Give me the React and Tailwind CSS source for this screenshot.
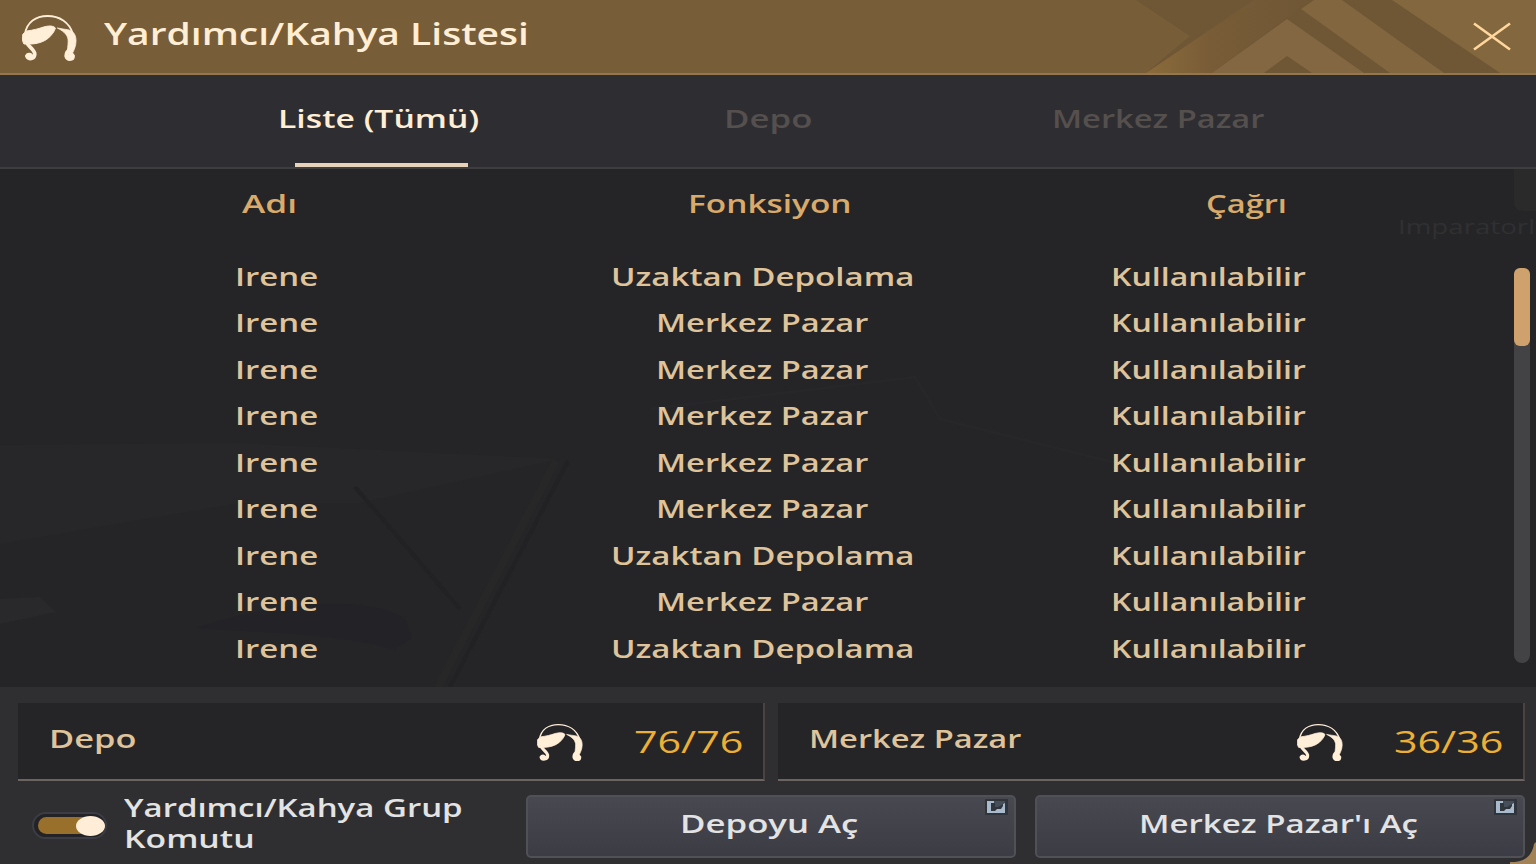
import React, { useLayoutEffect, useRef, useState } from 'react';

const rows = [
  'Uzaktan Depolama',
  'Merkez Pazar',
  'Merkez Pazar',
  'Merkez Pazar',
  'Merkez Pazar',
  'Merkez Pazar',
  'Uzaktan Depolama',
  'Merkez Pazar',
  'Uzaktan Depolama',
];

// Label stretched horizontally so that it fills the given width
function Wide({ width, className = '', children }) {
  const ref = useRef(null);
  const [scale, setScale] = useState(1);

  useLayoutEffect(() => {
    setScale(width / ref.current.offsetWidth);
  }, [width, children]);

  return (
    <span className={`block ${className}`} style={{ width }}>
      <span
        ref={ref}
        className="inline-block whitespace-nowrap origin-left"
        style={{ transform: `scaleX(${scale})` }}
      >
        {children}
      </span>
    </span>
  );
}

function HelperIcon({ className }) {
  return (
    <svg viewBox="0 0 56 48" preserveAspectRatio="none" className={className} fill="none" stroke="#ffeed8">
      <path d="M3 20C5 8 14 2 26 2C38 2 48 8 52 20" strokeWidth="1.8" />
      <path d="M1 20L5 17C12 16 16 15 22 13C26 12 31 11 34 14C33 18 30 21 27 24C22 28 15 30 8 30H2C0 27 0 23 1 20Z" fill="#ffeed8" strokeWidth="1" />
      <path d="M36 14L42 15L48 16C53 18 55 21 55 27C55 32 53 36 51 40L46 40C46 35 47 32 47 27C47 22 44 18 36 14Z" fill="#ffeed8" strokeWidth="0.8" />
      <path d="M5 29C7 33 13 36 13 40C13 45 6 46 5 42C6 40 9 40 10 43" strokeWidth="3.8" />
      <path d="M49 36C46 37 45 39 45 42C46 46 52 46 52 42C51 40 49 40 48 43" strokeWidth="3.8" />
    </svg>
  );
}

function Summary({ label, labelWidth, value }) {
  return (
    <div className="flex h-[78px] w-[747px] items-start border-r-2 border-b-2 border-r-[#4a4341] border-b-[#6b6462] bg-[#252527] pl-[31px]">
      <Wide width={labelWidth} className="mt-[17px] text-[25px] leading-9 font-semibold text-[#dfc39b]">{label}</Wide>
      <div className="mt-[20px] mr-[20px] ml-auto flex">
        <HelperIcon className="mr-[51px] h-[39px] w-[46px]" />
        <Wide width={109} className="text-[31px] leading-9 font-medium text-[#edb036]">{value}</Wide>
      </div>
    </div>
  );
}

function OpenButton({ label, labelWidth }) {
  return (
    <button className="relative flex h-[63px] w-[490px] justify-center rounded-[5px] border-2 border-[#505057] bg-linear-to-b from-[#484851] to-[#3c3c45] pt-[8px]">
      <Wide width={labelWidth} className="-ml-1 text-left text-[25px] leading-9 font-semibold text-[#e3e3e3]">{label}</Wide>
      <svg viewBox="0 0 23 16" className="absolute top-[2px] right-[6px] h-[16px] w-[23px]">
        <rect width="23" height="16" fill="#30353c" />
        <path d="M2 2H9V4H6V7H8V10H6V12H10L12 10H16L18 7V3H20V14H2Z" fill="#a9bacd" />
        <path d="M9 2H20V4L13 8H10V4H9Z" fill="#454f5a" />
        <path d="M6 7H9L11 9L9 11H6Z" fill="#30373f" />
      </svg>
    </button>
  );
}

export default function App() {
  return (
    <div className="relative flex h-[864px] w-[1536px] flex-col overflow-hidden bg-[#252527] font-['Open_Sans',sans-serif]">
      <header className="relative flex h-[75px] shrink-0 border-b-2 border-[#94764f] bg-[#775d38]">
        <svg viewBox="0 0 476 73" className="absolute top-0 right-0 h-[73px] w-[476px]">
          <defs>
            <linearGradient id="band" x1="0" x2="1">
              <stop offset="0" stopColor="#8b6b3b" />
              <stop offset="0.4" stopColor="#785c37" />
              <stop offset="1" stopColor="#6f5635" />
            </linearGradient>
          </defs>
          <path d="M76 0H476V73H86L130 36Z" fill="#6f5635" />
          <path d="M86 73L194 0H250L152 73Z" fill="url(#band)" />
          <path d="M152 73L227 19L304 73H252L227 56L204 73Z" fill="#836742" />
          <path d="M241 9L254 0H282L384 73H330Z" fill="#82663f" />
          <path d="M332 0H476V73H440Z" fill="#83673e" />
        </svg>
        <HelperIcon className="mt-[14px] ml-[22px] h-[48px] w-[55px]" />
        <Wide width={425} className="mt-[11px] ml-[27px] text-[31px] leading-[44px] font-semibold text-[#ffedd4]">Yardımcı/Kahya Listesi</Wide>
        <svg viewBox="0 0 40 30" className="relative mt-[22px] mr-[24px] ml-auto h-[30px] w-[40px]" stroke="#ffd69c" strokeWidth="2.6">
          <path d="M2 1.5L38 27.5M38 1.5L2 27.5" />
        </svg>
      </header>

      <nav className="grid h-[94px] shrink-0 grid-cols-[389px_388px_393px] border-b-2 border-[#3e3e41] bg-[#2e2e32] pl-[185px] text-[25px] leading-9 font-semibold">
        <div className="flex flex-col items-center text-[#ffedd4]">
          <Wide width={201} className="mt-[25px] -ml-0.5">Liste (Tümü)</Wide>
          <div className="mt-auto ml-1 h-1 w-[173px] bg-[#e7d3ba]" />
        </div>
        <Wide width={89} className="mt-[25px] justify-self-center text-[#55504e]">Depo</Wide>
        <Wide width={213} className="mt-[25px] justify-self-center text-[#55504e]">Merkez Pazar</Wide>
      </nav>

      <main className="relative h-[518px] shrink-0">
        <svg viewBox="0 0 1536 518" className="absolute inset-0" fill="none">
          <path d="M0 276L240 274L560 290L360 334H240L0 375Z" fill="#272729" />
          <path d="M568 292L450 518M355 318L460 440" stroke="#222224" strokeWidth="4" />
          <path d="M556 292L438 518" stroke="#272728" strokeWidth="8" />
          <path d="M196 459C250 440 360 420 405 450L412 468L395 481C340 464 260 464 196 459Z" fill="#232227" />
          <path d="M0 430L40 428L56 443L0 455Z" fill="#29292b" />
          <path d="M650 240L915 208L940 250L1140 300" stroke="#272729" strokeWidth="3" />
          <rect x="1514" y="-16" width="50" height="58" rx="8" fill="#2a2a2b" />
        </svg>
        <div className="absolute top-[42px] left-[1398px] text-xl leading-8 text-[#303032]">
          <Wide width={137}>Imparatorl</Wide>
        </div>
        <div className="relative grid h-[84px] grid-cols-[538px_462px_493px] justify-items-center pt-[16px] text-[25px] leading-9 font-semibold text-[#d9aa69]">
          <Wide width={55}>Adı</Wide>
          <Wide width={163}>Fonksiyon</Wide>
          <Wide width={81}>Çağrı</Wide>
        </div>
        <div className="relative flex">
          <div className="w-[1445px] text-[25px] leading-9 font-semibold text-[#dfc39b]">
            {rows.map((job, i) => (
              <div key={i} className="grid h-[46.45px] grid-cols-[553px_419px_473px] justify-items-center pt-[5px]">
                <Wide width={83}>Irene</Wide>
                <Wide width={job === 'Merkez Pazar' ? 213 : 304}>{job}</Wide>
                <Wide width={195}>Kullanılabilir</Wide>
              </div>
            ))}
          </div>
          <div className="mt-[15px] ml-[69px] h-[395px] w-4 rounded-full bg-[#434346]">
            <div className="h-[78px] rounded-md bg-[#cfa16d]" />
          </div>
        </div>
      </main>

      <footer className="relative flex-1 bg-[#2f2f31] pt-4 pl-[18px]">
        <div className="flex gap-[13px]">
          <Summary label="Depo" labelWidth={88} value="76/76" />
          <Summary label="Merkez Pazar" labelWidth={213} value="36/36" />
        </div>
        <div className="mt-[14px] flex">
          <div className="mt-[17px] ml-[14px] h-[27px] w-[75px] rounded-full border-2 border-[#3c3c44] bg-[#232226] p-[3px] pl-[4px]">
            <div className="flex h-full justify-end rounded-full bg-[#986f2b]">
              <div className="-mt-px mr-[-3px] h-[20px] w-[29px] rounded-[50%] bg-[#ffedd7]" />
            </div>
          </div>
          <div className="mt-[-3px] ml-[17px] w-[402px] text-[25px] leading-[31px] font-semibold text-[#e3e3e3]">
            <Wide width={339}>Yardımcı/Kahya Grup</Wide>
            <Wide width={131}>Komutu</Wide>
          </div>
          <div className="flex gap-[19px]">
            <OpenButton label="Depoyu Aç" labelWidth={178} />
            <OpenButton label="Merkez Pazar'ı Aç" labelWidth={279} />
          </div>
        </div>
        <svg viewBox="0 0 26 22" className="absolute right-0 bottom-0 h-[22px] w-[26px]">
          <path d="M0 22V20C15 20 22 14 24 2L26 0V22Z" fill="#a18357" />
        </svg>
      </footer>
    </div>
  );
}
